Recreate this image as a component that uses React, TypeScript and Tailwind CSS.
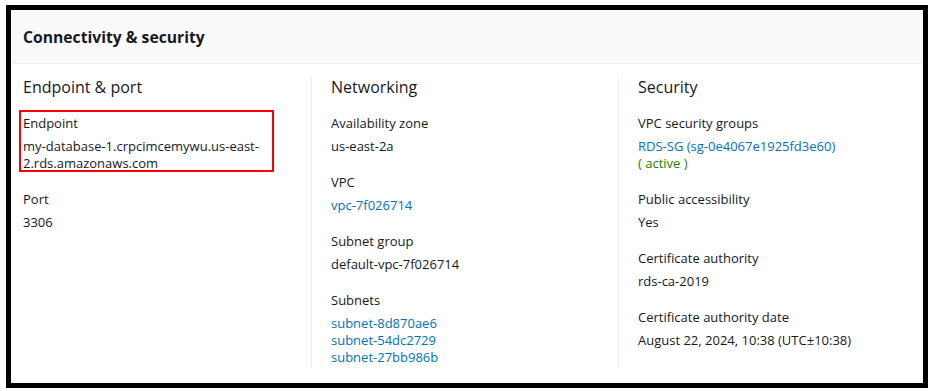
import React from "react";

type Item = { label: string; value: React.ReactNode; boxed?: boolean };

function Field({ label, value, boxed }: Item) {
  return (
    <div className="relative">
      {boxed && (
        <span className="pointer-events-none absolute left-[-4px] top-[-4.5px] h-[62px] w-[255px] border-2 border-[#ff0000]" />
      )}
      <div className="text-[13px] leading-[17px] text-[#16191f]">{label}</div>
      <div className="mt-[6px] text-[13px] leading-[17px] text-[#16191f]">{value}</div>
    </div>
  );
}

function Column({
  title,
  items,
  className,
}: {
  title: string;
  items: Item[];
  className: string;
}) {
  return (
    <div className={className}>
      <div className="text-[16px] leading-[20px] text-[#16191f]">{title}</div>
      <div className="mt-[17.5px] flex flex-col gap-[19px]">
        {items.map((it) => (
          <Field key={it.label} {...it} />
        ))}
      </div>
    </div>
  );
}

const link = "text-[#0073bb]";

export default function App() {
  return (
    <div
      className="h-[391px] w-[932px] bg-white pl-[6px] pt-[5px]"
      style={{ fontFamily: '"Open Sans", "Noto Sans", sans-serif' }}
    >
      <div className="flex h-[383px] w-[922px] flex-col border-[5px] border-black bg-white">
        <div className="flex h-[54px] items-center border-b border-[#eaeded] bg-[#fafafa] pl-[12px]">
          <h2 className="text-[15.7px] font-bold leading-[22px] text-[#16191f]">
            Connectivity &amp; security
          </h2>
        </div>
        <div className="flex flex-1 pb-[15px] pt-[13px]">
          <Column
            className="w-[300px] pl-[12px]"
            title="Endpoint & port"
            items={[
              {
                label: "Endpoint",
                boxed: true,
                value: (
                  <span className="block max-w-[250px] break-words">
                    my-database-1.crpcimcemywu.us-east-2.rds.amazonaws.com
                  </span>
                ),
              },
              { label: "Port", value: "3306" },
            ]}
          />
          <Column
            className="w-[307px] border-l border-[#eaeded] pl-[19px]"
            title="Networking"
            items={[
              { label: "Availability zone", value: "us-east-2a" },
              { label: "VPC", value: <span className={link}>vpc-7f026714</span> },
              { label: "Subnet group", value: "default-vpc-7f026714" },
              {
                label: "Subnets",
                value: (
                  <div className="flex flex-col">
                    <span className={link}>subnet-8d870ae6</span>
                    <span className={link}>subnet-54dc2729</span>
                    <span className={link}>subnet-27bb986b</span>
                  </div>
                ),
              },
            ]}
          />
          <Column
            className="flex-1 border-l border-[#eaeded] pl-[19px]"
            title="Security"
            items={[
              {
                label: "VPC security groups",
                value: (
                  <div className="flex flex-col">
                    <span className={link}>RDS-SG (sg-0e4067e1925fd3e60)</span>
                    <span className="text-[#1d8102]">( active )</span>
                  </div>
                ),
              },
              { label: "Public accessibility", value: "Yes" },
              { label: "Certificate authority", value: "rds-ca-2019" },
              {
                label: "Certificate authority date",
                value: "August 22, 2024, 10:38 (UTC±10:38)",
              },
            ]}
          />
        </div>
      </div>
    </div>
  );
}
